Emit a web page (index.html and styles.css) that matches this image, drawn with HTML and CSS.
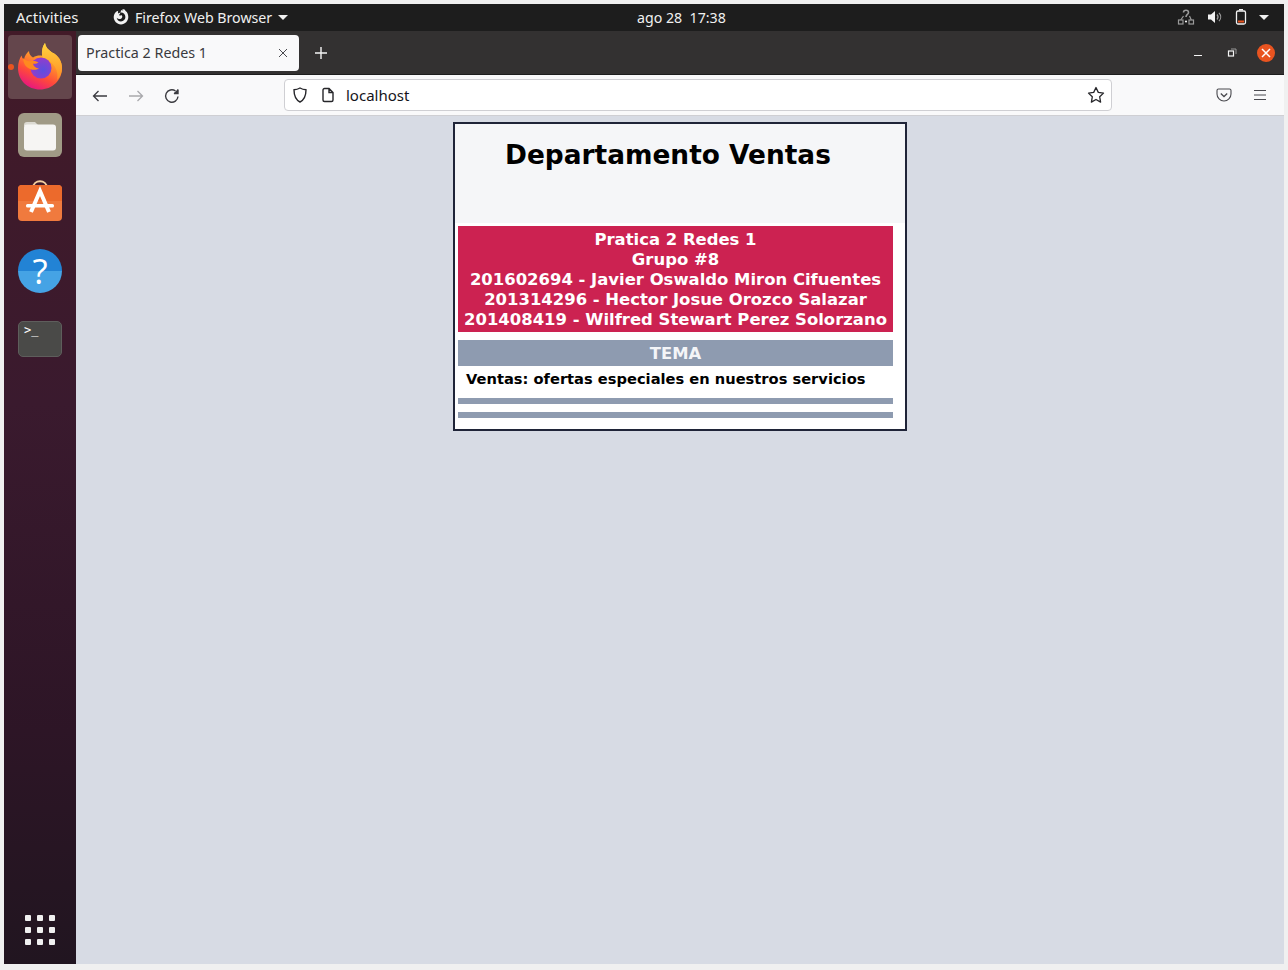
FILE: index.html
```html
<!DOCTYPE html>
<html lang="es">
<head>
    <meta charset="UTF-8">
    <title>Practica 2 Redes 1</title>
    <link rel="stylesheet" href="styles.css">
</head>
<body>
    <div class="desktop">
        <!-- GNOME top bar -->
        <header class="topbar">
            <div class="topbar-left">
                <span class="activities">Activities</span>
                <span class="app-menu">
                    <svg class="app-icon" width="18" height="18" viewBox="0 0 18 18">
                        <path fill="#f2f2f2" fill-rule="evenodd" d="M9 2.200C10 2.200 10.600 2.400 11.200 2.600L10.200 1l2.400.4 1 1.600C15.400 4.300 16.300 6.400 16.300 9.100 16.300 13.200 13.100 16.400 9 16.400 4.900 16.400 1.700 13.200 1.700 9.100 1.700 6 3.600 3.400 6.300 2.700 5.600 4 6 5 6.600 5.400 7.200 4.900 8 4.600 9 4.600 11.500 4.600 13.400 6.600 13.400 9.100 13.400 11.500 11.500 13.500 9 13.500 6.800 13.500 5 11.900 4.700 9.800 6 11.200 8 11.400 9.400 10.400 10.700 9.400 10.500 7.800 9.300 7 8.500 7.800 7.600 7.600 7 7 7.400 6.400 8.400 6.100 9 2.200Z"/>
                    </svg>
                    <span>Firefox Web Browser</span>
                    <span class="caret"></span>
                </span>
            </div>
            <div class="clock">ago 28&nbsp; 17:38</div>
            <div class="tray">
                <svg width="18" height="18" viewBox="0 0 18 18" fill="none" stroke="#9a9a9a" stroke-width="1.200">
                    <rect x="1.500" y="12" width="4.500" height="4"/>
                    <rect x="12" y="12" width="4.500" height="4"/>
                    <path d="M3.700 12 6.500 8M14.300 12 12.500 8"/>
                    <path d="M6.500 4.500C6.500 1.500 11.500 1.500 11.500 4.500 11.500 6.500 9 6.500 9 9" stroke-width="1.600"/>
                    <circle cx="9" cy="13.500" r="1.100" fill="#f2f2f2" stroke="none"/>
                </svg>
                <svg width="16" height="16" viewBox="0 0 16 16">
                    <path fill="#f2f2f2" d="M1 5.500h3L8 2v12L4 10.500H1z"/>
                    <path fill="none" stroke="#9a9a9a" stroke-width="1.200" d="M10 5.500c1.200 1.400 1.200 3.600 0 5M12 3.800c2.200 2.400 2.200 6 0 8.400"/>
                </svg>
                <svg class="battery" width="12" height="16" viewBox="0 0 12 16">
                    <path fill="#f2f2f2" d="M4 0h4v1.500H4z"/>
                    <rect x="1.500" y="2" width="9" height="13" rx="1.500" fill="none" stroke="#f2f2f2" stroke-width="1.300"/>
                    <rect x="3" y="11.500" width="6" height="2" fill="#e95420"/>
                </svg>
                <span class="caret"></span>
            </div>
        </header>

        <div class="workspace">
            <!-- Ubuntu dock -->
            <nav class="dock">
                <div class="dock-item active">
                    <span class="running-dot"></span>
                    <svg width="48" height="48" viewBox="0 0 48 48">
                        <defs>
                            <linearGradient id="foxBody" x1="0.800" y1="0.050" x2="0.350" y2="1">
                                <stop offset="0" stop-color="#ffe14a"/>
                                <stop offset="0.350" stop-color="#ff9a2a"/>
                                <stop offset="0.700" stop-color="#ff4a3a"/>
                                <stop offset="1" stop-color="#e8177f"/>
                            </linearGradient>
                            <linearGradient id="foxTail" x1="0.500" y1="0" x2="0.500" y2="1">
                                <stop offset="0" stop-color="#ffd53f"/>
                                <stop offset="1" stop-color="#ff8a24"/>
                            </linearGradient>
                            <radialGradient id="foxGlobe" cx="0.600" cy="0.600" r="0.650">
                                <stop offset="0" stop-color="#5a4fe0"/>
                                <stop offset="1" stop-color="#9a3ac8"/>
                            </radialGradient>
                        </defs>
                        <path fill="url(#foxBody)" d="M29 0c.5 4 3 6.500 7 9.500C42 12 46 18 46 25c0 12.500-10 21.500-22 21.500S2 37.500 2 25c0-5 1.500-9.500 3.500-12.500.5 2 1.200 3 2.500 4 .5-3.500 2.500-6.500 5-8.500 0 3 1.500 5 4 6.500 3-1.800 6-2.300 9-1.800C25.500 7.500 26.500 3.500 29 0z"/>
                        <path fill="url(#foxTail)" d="M29 0c.5 4 3 6.500 7 9.500C42 12 46 18 46 25c0 5-2 9-5 12 1-4 .5-9-2-13-2-3.500-6-7-12.500-9.500C25.500 7.500 26.500 3.500 29 0z"/>
                        <circle cx="25" cy="25" r="10.500" fill="url(#foxGlobe)"/>
                        <path fill="#ff8a1f" d="M7 15c2 2.500 5 3.500 9 3 2.500-.3 5 .2 6.500 1.500-1.500 1-3.500 1.500-5.500 1.200.8 2.800 2.800 4.500 6 4.800-3 2-8 1.800-11.500-1C9 23 7.200 19 7 15z"/>
                    </svg>
                </div>
                <div class="dock-item">
                    <svg width="44" height="44" viewBox="0 0 44 44">
                        <rect width="44" height="44" rx="6" fill="#a09a86"/>
                        <path fill="#dcdad2" d="M6 12a3 3 0 0 1 3-3h8l4 4H6z"/>
                        <rect x="6" y="11.500" width="32" height="26" rx="3" fill="#f6f5f3"/>
                    </svg>
                </div>
                <div class="dock-item">
                    <svg width="44" height="48" viewBox="0 0 44 48">
                        <path fill="none" stroke="#f5cfa0" stroke-width="1.800" d="M15 9c0-9 14-9 14 0"/>
                        <rect y="6" width="44" height="36" rx="4" fill="#f07a3e"/>
                        <path fill="#ec6a2c" d="M4 6h36a4 4 0 0 1 4 4v12H0V10a4 4 0 0 1 4-4z"/>
                        <path fill="none" stroke="#fff" stroke-width="4" d="M13 33 22 12l9 21"/>
                        <rect x="8" y="25" width="28" height="3.500" rx="1.500" fill="#fff"/>
                    </svg>
                </div>
                <div class="dock-item">
                    <div class="help-icon">?</div>
                </div>
                <div class="dock-item">
                    <div class="terminal-icon">&gt;_</div>
                </div>
                <div class="apps-grid">
                    <i></i><i></i><i></i><i></i><i></i><i></i><i></i><i></i><i></i>
                </div>
            </nav>

            <!-- Firefox window -->
            <main class="browser">
                <div class="tabbar">
                    <div class="tab">
                        <span class="tab-title">Practica 2 Redes 1</span>
                        <svg width="10" height="10" viewBox="0 0 10 10" stroke="#4a4a4f" stroke-width="1"><path d="M1 1l8 8M9 1l-8 8"/></svg>
                    </div>
                    <svg class="new-tab" width="14" height="14" viewBox="0 0 14 14" stroke="#f5f5f5" stroke-width="1.400"><path d="M7 1v12M1 7h12"/></svg>
                    <div class="win-controls">
                        <span class="win-min"></span>
                        <svg width="10" height="10" viewBox="0 0 10 10" fill="none" stroke="#f5f5f5"><rect x="1.500" y="3" width="5" height="5" stroke-width="1.200"/><path d="M4 1h5v5" stroke="#999" stroke-width="1"/></svg>
                        <span class="win-close">
                            <svg width="10" height="10" viewBox="0 0 10 10" stroke="#fff" stroke-width="1.500"><path d="M1 1l8 8M9 1l-8 8"/></svg>
                        </span>
                    </div>
                </div>
                <div class="toolbar">
                    <div class="nav-buttons">
                        <svg width="16" height="16" viewBox="0 0 16 16" fill="none" stroke="#3b3b40" stroke-width="1.300"><path d="M15 8H1.500M6.500 3 1.500 8l5 5"/></svg>
                        <svg width="16" height="16" viewBox="0 0 16 16" fill="none" stroke="#a9a9ac" stroke-width="1.300"><path d="M1 8h13.500M9.500 3l5 5-5 5"/></svg>
                        <svg width="16" height="16" viewBox="0 0 16 16" fill="none" stroke="#3b3b40" stroke-width="1.400"><path d="M14 8.500A6.200 6.200 0 1 1 11.500 3"/><path d="M14 1v4.500H9.500" fill="#3b3b40" stroke="none"/><path d="M14 1.500v4h-4"/></svg>
                    </div>
                    <div class="urlbar">
                        <svg width="16" height="16" viewBox="0 0 16 16" fill="none" stroke="#26262a" stroke-width="1.400"><path d="M8 1c2 1.200 4 1.700 6 1.800 0 6-1.500 10-6 12.200C3.500 12.800 2 8.800 2 2.800 4 2.700 6 2.200 8 1z"/></svg>
                        <svg class="page-icon" width="14" height="16" viewBox="0 0 14 16" fill="none" stroke="#26262a" stroke-width="1.400"><path d="M2 3a1.500 1.500 0 0 1 1.500-1.500h4.500L12 5.500V13a1.500 1.500 0 0 1-1.500 1.500h-7A1.500 1.500 0 0 1 2 13zM8 1.500v4h4"/></svg>
                        <span class="url">localhost</span>
                        <svg class="star" width="18" height="18" viewBox="0 0 18 18" fill="none" stroke="#26262a" stroke-width="1.300"><path stroke-linejoin="round" d="M9 1.500l2.300 4.900 5.200.7-3.800 3.700.9 5.300L9 13.500l-4.600 2.600.9-5.300L1.500 7.100l5.200-.7z"/></svg>
                    </div>
                    <div class="toolbar-right">
                        <svg width="16" height="16" viewBox="0 0 16 16" fill="none" stroke="#4a4a4f" stroke-width="1.100"><path d="M2.500 2h11A1.500 1.500 0 0 1 15 3.500V7a7 7 0 0 1-14 0V3.500A1.500 1.500 0 0 1 2.500 2z"/><path d="M4.800 6.500 8 9.500l3.200-3" stroke-width="1.300"/></svg>
                        <svg width="16" height="16" viewBox="0 0 16 16" stroke="#4a4a4f" stroke-width="1.200"><path d="M2 3.500h12M2 8h12M2 12.500h12"/></svg>
                    </div>
                </div>

                <!-- page content -->
                <div class="viewport">
                    <div class="wrapper">
                        <div class="page-header">
                            <h1>Departamento Ventas</h1>
                        </div>
                        <div class="content-col">
                            <div class="info">
                                Pratica 2 Redes 1<br>
                                Grupo #8<br>
                                201602694 - Javier Oswaldo Miron Cifuentes<br>
                                201314296 - Hector Josue Orozco Salazar<br>
                                201408419 - Wilfred Stewart Perez Solorzano
                            </div>
                            <div class="section-title">TEMA</div>
                            <p class="topic">Ventas: ofertas especiales en nuestros servicios</p>
                            <div class="divider"></div>
                            <div class="divider"></div>
                        </div>
                    </div>
                </div>
            </main>
        </div>
    </div>
</body>
</html>
```

FILE: styles.css
```css
* {
    box-sizing: border-box;
}
html, body {
    height: 100%;
}
body {
    margin: 0;
    padding: 4px 4px 6px;
    background-color: #f0f0f0;
    overflow: hidden;
    font-family: "Noto Sans", sans-serif;
}
.desktop {
    height: 960px;
    display: flex;
    flex-direction: column;
}

/* top bar */
.topbar {
    height: 27px;
    background-color: #1d1d1d;
    color: #f0f0f0;
    font-size: 14.2px;
    display: grid;
    grid-template-columns: 621px auto 1fr;
    align-items: center;
    padding: 0 12px 1px;
}
.topbar-left {
    display: flex;
    align-items: center;
}
.activities {
    width: 62px;
    margin-right: 34px;
    font-size: 15px;
}
.app-menu {
    display: flex;
    align-items: center;
    gap: 5px;
}
.app-icon {
    margin-top: -1px;
}
.app-menu .caret {
    margin-left: 1px;
}
.caret {
    width: 0;
    height: 0;
    border-left: 5px solid transparent;
    border-right: 5px solid transparent;
    border-top: 5px solid #f0f0f0;
}
.tray {
    display: flex;
    align-items: center;
    justify-content: flex-end;
    gap: 12px;
    margin-right: 3px;
}

/* dock */
.workspace {
    flex: 1;
    display: flex;
    min-height: 0;
}
.dock {
    width: 72px;
    background: linear-gradient(to bottom, #421a28 0%, #3a1a2e 40%, #2d1526 75%, #211520 100%);
    display: flex;
    flex-direction: column;
    align-items: center;
    padding-top: 4px;
}
.dock-item {
    position: relative;
    width: 64px;
    height: 64px;
    margin-bottom: 4px;
    display: flex;
    align-items: center;
    justify-content: center;
    border-radius: 4px;
}
.dock-item.active {
    background-color: #64464c;
}
.running-dot {
    position: absolute;
    left: 0;
    top: 29px;
    width: 6px;
    height: 6px;
    border-radius: 50%;
    background-color: #e95420;
}
.help-icon {
    width: 44px;
    height: 44px;
    border-radius: 50%;
    background: linear-gradient(to bottom, #2283d5 50%, #45a3e5 50%);
    color: #fff;
    font-family: "Open Sans", sans-serif;
    font-size: 35px;
    line-height: 44px;
    text-align: center;
}
.terminal-icon {
    width: 44px;
    height: 36px;
    border: 1px solid #5e5e5c;
    border-radius: 5px;
    background-color: #4a4a48;
    color: #fff;
    font-family: "DejaVu Sans Mono", monospace;
    font-size: 12px;
    line-height: 14px;
    padding: 1px 5px;
}
.apps-grid {
    margin-top: auto;
    margin-bottom: 19px;
    display: grid;
    grid-template-columns: repeat(3, 6px);
    gap: 6px;
}
.apps-grid i {
    height: 6px;
    border-radius: 1px;
    background-color: #f0f0f0;
}

/* browser */
.browser {
    flex: 1;
    display: flex;
    flex-direction: column;
    min-width: 0;
}
.tabbar {
    height: 44px;
    background-color: #333131;
    border-bottom: 1px solid #1d1d1d;
    display: flex;
    align-items: center;
    padding-left: 2px;
}
.tab {
    width: 221px;
    height: 36px;
    background-color: #f9f9fa;
    border-radius: 4px;
    display: flex;
    align-items: center;
    justify-content: space-between;
    padding: 0 11px 0 8px;
    font-size: 14.3px;
    color: #3a3a3e;
}
.new-tab {
    margin-left: 15px;
}
.win-controls {
    margin-left: auto;
    display: flex;
    align-items: center;
    padding-right: 9px;
}
.win-min {
    width: 8px;
    height: 1px;
    margin-top: 5px;
    margin-right: 25px;
    background-color: #f5f5f5;
}
.win-close {
    width: 18px;
    height: 18px;
    margin-left: 20px;
    border-radius: 50%;
    background-color: #e95420;
    display: flex;
    align-items: center;
    justify-content: center;
}
.toolbar {
    height: 41px;
    background-color: #f9f9fa;
    border-bottom: 1px solid #cfcfd3;
    display: flex;
    align-items: center;
}
.nav-buttons {
    width: 208px;
    display: flex;
    gap: 20px;
    padding: 1px 0 0 16px;
}
.urlbar {
    width: 828px;
    height: 32px;
    background-color: #fff;
    border: 1px solid #cfcfd3;
    border-radius: 4px;
    display: flex;
    align-items: center;
    padding: 0 6px 0 7px;
    font-size: 15px;
    color: #15141a;
}
.page-icon {
    margin-left: 13px;
}
.url {
    margin-left: 11px;
}
.star {
    margin-left: auto;
}
.toolbar-right {
    margin-left: auto;
    display: flex;
    gap: 20px;
    padding-right: 16px;
}

/* page */
.viewport {
    flex: 1;
    background-color: #d7dbe4;
    padding-top: 6px;
    font-family: "DejaVu Sans", sans-serif;
    font-weight: bold;
}
.wrapper {
    width: 454px;
    height: 309px;
    margin-left: 377px;
    background-color: #fff;
    border: 2px solid #1f2438;
}
.page-header {
    height: 99px;
    background-color: #f5f6f8;
    padding: 14px 0 0 50px;
}
h1 {
    margin: 0;
    font-size: 26.4px;
    line-height: 33px;
    color: #000;
}
.content-col {
    width: 435px;
    margin: 3px 0 0 3px;
}
.info {
    background-color: #cc2251;
    color: #fff;
    font-size: 16.45px;
    line-height: 20px;
    text-align: center;
    padding: 4px 0 2px;
}
.section-title {
    margin-top: 8px;
    height: 26px;
    padding-top: 1px;
    background-color: #8e9bb0;
    color: #f4f5f8;
    font-size: 16.4px;
    line-height: 26px;
    text-align: center;
}
.topic {
    margin: 0;
    padding: 4px 8px 0;
    height: 32px;
    font-size: 14.67px;
    line-height: 18px;
    color: #000;
}
.divider {
    height: 6px;
    margin-bottom: 8px;
    background-color: #8e9bb0;
}
```
